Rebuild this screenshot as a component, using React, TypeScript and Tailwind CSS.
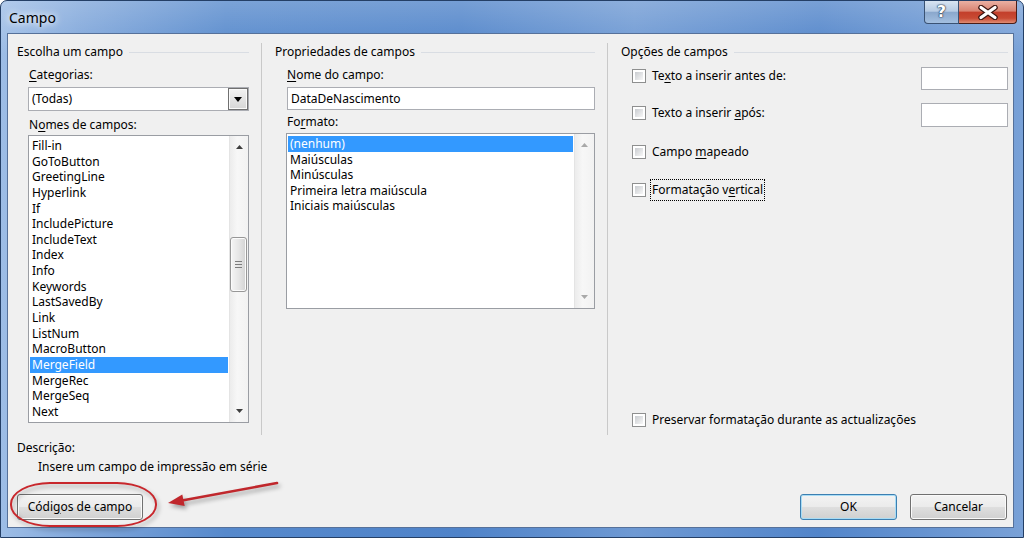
import React from 'react'

const fields = [
  'Fill-in', 'GoToButton', 'GreetingLine', 'Hyperlink', 'If', 'IncludePicture', 'IncludeText',
  'Index', 'Info', 'Keywords', 'LastSavedBy', 'Link', 'ListNum', 'MacroButton', 'MergeField',
  'MergeRec', 'MergeSeq', 'Next',
]
const formats = ['(nenhum)', 'Maiúsculas', 'Minúsculas', 'Primeira letra maiúscula', 'Iniciais maiúsculas']

function Arrow({ up, dim }: { up?: boolean; dim?: boolean }) {
  return (
    <svg width="7" height="4" viewBox="0 0 7 4">
      <polygon points={up ? '0,4 7,4 3.5,0' : '0,0 7,0 3.5,4'} fill={dim ? '#a9a9a9' : '#3e3e3e'} />
    </svg>
  )
}

function ScrollBar({ dim, thumbTop, thumbH, w }: { dim?: boolean; thumbTop?: number; thumbH?: number; w: string }) {
  return (
    <div className={`${w} flex flex-col border-l border-[#e4e4e4] bg-[linear-gradient(90deg,#ececec,#f7f7f7_40%,#f2f2f2)]`}>
      <div className="h-[22px] flex items-center justify-center"><Arrow up dim={dim} /></div>
      <div className="flex-1">
        {thumbH ? (
          <div
            className="mr-[1px] rounded-[3px] border border-[#979797] bg-[linear-gradient(90deg,#f5f5f5,#e6e6e6_50%,#d3d3d3)] shadow-[inset_0_0_0_1px_#fbfbfb] flex flex-col items-center justify-center gap-[2px]"
            style={{ marginTop: thumbTop, height: thumbH }}
          >
            <div className="w-[7px] h-px bg-[#7d7d7d]" />
            <div className="w-[7px] h-px bg-[#7d7d7d]" />
            <div className="w-[7px] h-px bg-[#7d7d7d]" />
          </div>
        ) : null}
      </div>
      <div className="h-[22px] flex items-center justify-center"><Arrow dim={dim} /></div>
    </div>
  )
}

function Header({ label }: { label: string }) {
  return (
    <div className="flex items-center h-[16px] leading-[16px] gap-[6px]">
      <span className="whitespace-nowrap">{label}</span>
      <div className="flex-1 h-px bg-[#d9dde3]" />
    </div>
  )
}

function Check() {
  return (
    <span className="block w-[14px] h-[14px] shrink-0 border border-[#8e8f8f] bg-white p-[2px]">
      <span className="block w-full h-full bg-linear-to-br from-[#c9ccd0] to-[#f7f7f7]" />
    </span>
  )
}

function Btn({ children, def, w }: { children: React.ReactNode; def?: boolean; w: string }) {
  return (
    <div
      className={`${w} h-[26px] flex items-center justify-center rounded-[3px] border bg-[linear-gradient(180deg,#f3f3f3_0%,#ebebeb_48%,#dedede_52%,#d0d0d0_100%)] ${
        def
          ? 'border-[#3c7fb1] shadow-[inset_0_0_0_1px_#a8dcf5]'
          : 'border-[#707070] shadow-[inset_0_0_0_1px_#fafafa]'
      }`}
    >
      {children}
    </div>
  )
}

export default function App() {
  return (
    <div className="relative w-[1024px] h-[538px] bg-white overflow-hidden font-['Noto_Sans',sans-serif] text-[12px] text-black">
      <div className="flex flex-col w-full h-full rounded-t-[7px] border border-[#243f66] bg-[linear-gradient(180deg,rgba(255,255,255,0.22),rgba(255,255,255,0)_10%),linear-gradient(90deg,#9dbde6_0%,#7fa6da_8%,#5689cc_22%,#4f83c9_45%,#6e99d3_62%,#5285ca_80%,#79a1d7_100%)]">
        {/* title bar */}
        <div className="h-[32px] flex items-start shrink-0">
          <div className="h-[32px] flex items-center pl-[8px] text-[14px] [text-shadow:0_0_6px_#fff,0_0_10px_rgba(255,255,255,0.8)]">
            Campo
          </div>
          <div className="ml-auto mr-[6px] flex">
            <div className="w-[35px] h-[23px] flex items-center justify-center rounded-bl-[4px] border border-t-0 border-[#3a5273] bg-[linear-gradient(180deg,#d8e4f2_0%,#b6cbe4_46%,#8ba8cd_52%,#a3bfe0_100%)]">
              <span className="font-['DejaVu_Sans',sans-serif] font-bold text-[16px] leading-none text-white [text-shadow:0_0_1px_#26384f,0_0_1px_#26384f,0_0_2px_#26384f]">?</span>
            </div>
            <div className="w-[58px] h-[23px] flex items-center justify-center rounded-br-[4px] border border-t-0 border-l-0 border-[#4a1d17] bg-[linear-gradient(180deg,#eab0a3_0%,#d98472_45%,#c33f2b_52%,#c84a33_78%,#e08c73_100%)]">
              <svg width="24" height="15" viewBox="0 0 24 15">
                <path d="M5 2.5 L19 12.5 M19 2.5 L5 12.5" stroke="#3b1510" strokeWidth="5.5" strokeLinecap="round" />
                <path d="M5 2.5 L19 12.5 M19 2.5 L5 12.5" stroke="#ffffff" strokeWidth="3.2" strokeLinecap="round" />
              </svg>
            </div>
          </div>
        </div>

        {/* client area */}
        <div className="ml-[6px] mr-[9px] mb-[9px] flex-1 flex flex-col border border-[#56719a] bg-[#f0f0f0]">
          <div className="mt-[9px] h-[392px] flex">
            {/* Escolha um campo */}
            <div className="w-[254px] pl-[9px] pr-[12px] pt-[1px] flex flex-col border-r border-[#c9c9c9]">
              <Header label="Escolha um campo" />
              <div className="mt-[7px] ml-[12px] h-[16px] leading-[16px]">
                <span className="underline underline-offset-[2px]">C</span>ategorias:
              </div>
              <div className="mt-[4px] ml-[11px] h-[24px] flex border border-[#abadb3] bg-white">
                <div className="flex-1 pl-[3px] flex items-center">(Todas)</div>
                <div className="w-[20px] border border-[#707070] bg-[linear-gradient(180deg,#f2f2f2,#d6d6d6)] flex items-center justify-center shadow-[inset_0_0_0_1px_#fafafa]">
                  <svg width="8" height="5" viewBox="0 0 8 5"><polygon points="0,0 8,0 4,5" fill="#000" /></svg>
                </div>
              </div>
              <div className="mt-[6px] ml-[12px] h-[16px] leading-[16px]">
                N<span className="underline underline-offset-[2px]">o</span>mes de campos:
              </div>
              <div className="mt-[2px] ml-[11px] h-[288px] flex border border-[#9a9da3] bg-white">
                <div className="flex-1 pt-[2px] px-[1px]">
                  {fields.map((f) => (
                    <div
                      key={f}
                      className={`h-[15.65px] leading-[15.65px] pl-[2px] whitespace-nowrap ${f === 'MergeField' ? 'bg-[#3399ff] text-white' : ''}`}
                    >
                      {f}
                    </div>
                  ))}
                </div>
                <ScrollBar w="w-[19px]" thumbTop={79} thumbH={55} />
              </div>
            </div>

            {/* Propriedades de campos */}
            <div className="w-[346px] pl-[13px] pr-[12px] pt-[1px] flex flex-col border-r border-[#c9c9c9]">
              <Header label="Propriedades de campos" />
              <div className="mt-[7px] ml-[12px] h-[16px] leading-[16px]">
                <span className="underline underline-offset-[2px]">N</span>ome do campo:
              </div>
              <div className="mt-[4px] ml-[12px] h-[23px] flex items-center pl-[3px] border border-[#abadb3] bg-white">
                DataDeNascimento
              </div>
              <div className="mt-[4px] ml-[12px] h-[16px] leading-[16px]">
                Fo<span className="underline underline-offset-[2px]">r</span>mato:
              </div>
              <div className="mt-[3px] ml-[11px] h-[176px] flex border border-[#9a9da3] bg-white">
                <div className="flex-1 pt-[2px] pl-[1px] pr-[1px]">
                  {formats.map((f, i) => (
                    <div
                      key={f}
                      className={`h-[15.6px] leading-[15.6px] pl-[2px] whitespace-nowrap ${i === 0 ? 'bg-[#3399ff] text-white' : ''}`}
                    >
                      {f}
                    </div>
                  ))}
                </div>
                <ScrollBar w="w-[20px]" dim />
              </div>
            </div>

            {/* Opções de campos */}
            <div className="flex-1 pl-[13px] pr-[5px] pt-[1px] flex flex-col">
              <Header label="Opções de campos" />
              <div className="mt-[7px] flex items-start justify-between">
                <div className="ml-[11px] h-[17px] flex items-center gap-[6px]">
                  <Check />
                  <span>Te<span className="underline underline-offset-[2px]">x</span>to a inserir antes de:</span>
                </div>
                <div className="w-[87px] h-[23px] border border-[#abadb3] bg-white" />
              </div>
              <div className="mt-[13px] flex items-start justify-between">
                <div className="mt-[1px] ml-[11px] h-[17px] flex items-center gap-[6px]">
                  <Check />
                  <span>Texto a inserir <span className="underline underline-offset-[2px]">a</span>pós:</span>
                </div>
                <div className="w-[87px] h-[24px] border border-[#abadb3] bg-white" />
              </div>
              <div className="mt-[16px] ml-[11px] h-[17px] flex items-center gap-[6px]">
                <Check />
                <span>Campo <span className="underline underline-offset-[2px]">m</span>apeado</span>
              </div>
              <div className="mt-[21px] ml-[11px] h-[17px] flex items-center gap-[4px]">
                <Check />
                <span className="px-[1px] py-[1px] border border-dotted border-[#000]">
                  Formatação v<span className="underline underline-offset-[2px]">e</span>rtical
                </span>
              </div>
              <div className="mt-auto mb-[7px] ml-[11px] h-[17px] flex items-center gap-[6px]">
                <Check />
                <span>Preservar formatação durante as actualizações</span>
              </div>
            </div>
          </div>

          {/* description + buttons */}
          <div className="flex-1 flex flex-col pl-[9px] pr-[6px]">
            <div className="mt-[5px] h-[16px] leading-[16px]">Descrição:</div>
            <div className="mt-[3px] pl-[21px] h-[16px] leading-[16px]">Insere um campo de impressão em série</div>
            <div className="mt-[19px] flex items-center">
              <Btn w="w-[126px]">
                <span>Códi<span className="underline underline-offset-[2px]">g</span>os de campo</span>
              </Btn>
              <div className="ml-auto flex gap-[13px]">
                <Btn w="w-[97px]" def>OK</Btn>
                <Btn w="w-[97px]">Cancelar</Btn>
              </div>
            </div>
          </div>
        </div>
      </div>

      {/* annotation: red ellipse and arrow */}
      <div className="absolute left-[10px] top-[482px] w-[147px] h-[45px] rounded-[40px/22px] border-2 border-[#c8272c] [filter:drop-shadow(2px_3px_2px_rgba(0,0,0,0.3))]" />
      <svg
        className="absolute left-[160px] top-[475px] [filter:drop-shadow(2px_3px_2px_rgba(0,0,0,0.35))]"
        width="125"
        height="40"
        viewBox="0 0 125 40"
      >
        <line x1="117" y1="8" x2="22" y2="25.5" stroke="#c0272c" strokeWidth="2.6" strokeLinecap="round" />
        <polygon points="8,28 24.7,31 22.3,19.5" fill="#c0272c" />
      </svg>
    </div>
  )
}
